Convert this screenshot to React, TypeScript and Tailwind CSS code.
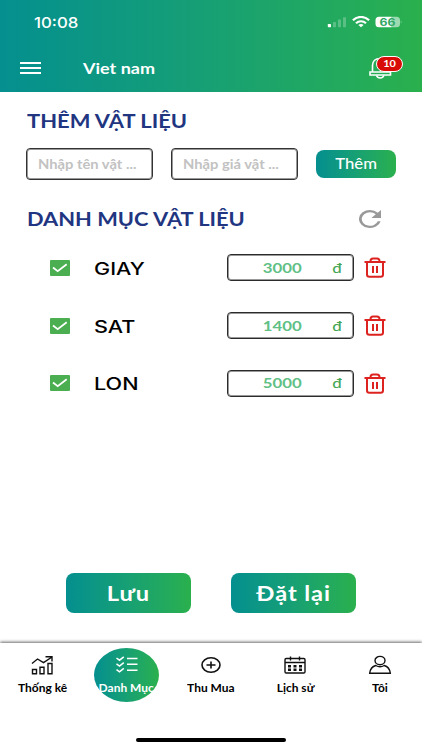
import { useState } from 'react'
import type { ReactNode } from 'react'

const materials = [
  { name: 'GIAY', price: '3000' },
  { name: 'SAT', price: '1400' },
  { name: 'LON', price: '5000' },
]

function WideText({ className, children }: { className: string; children: ReactNode }) {
  return <span className={`block whitespace-nowrap leading-none ${className}`}>{children}</span>
}

function StatusIcons() {
  return (
    <svg className="h-3 w-[76px]" viewBox="0 0 76 12" fill="#fff">
      <rect x="0.8" y="8" width="3.2" height="3.2" rx="0.6" />
      <g opacity="0.25">
        <rect x="6" y="6" width="3" height="5.2" rx="0.6" />
        <rect x="11" y="3.4" width="3" height="7.8" rx="0.6" />
        <rect x="16" y="1.2" width="3" height="10" rx="0.6" />
      </g>
      <g fill="none" stroke="#fff" strokeWidth="2.2">
        <path d="M25.9 4.3a11.5 11.5 0 0 1 16.2 0" />
        <path d="M29 7.2a7.4 7.4 0 0 1 10 0" />
      </g>
      <path d="M31.4 9a4.4 4.4 0 0 1 5.2 0L34 11.3z" />
      <path d="M52 .7h12.5v10.6H52a3.5 3.5 0 0 1-3.5-3.5V4.2A3.5 3.5 0 0 1 52 .7z" />
      <path d="M64.5 .7h5A3.5 3.5 0 0 1 73 4.2v3.6a3.5 3.5 0 0 1-3.5 3.5h-5z" opacity="0.55" />
      <path d="M73.8 4.4q1.6 1.6 0 3.2z" opacity="0.55" />
      <text
        x="52.5"
        y="9.8"
        fill="#2fa866"
        fontFamily="Inter, sans-serif"
        fontWeight="700"
        fontSize="10.5"
        textLength="16"
        lengthAdjust="spacingAndGlyphs"
      >
        66
      </text>
    </svg>
  )
}

function BellIcon() {
  return (
    <svg className="h-[22px] w-6" viewBox="0 0 24 22" fill="none" stroke="#fff" strokeWidth="1.6">
      <path d="M3.5 15V8.500C3.500 4 6.500 1.500 11 1.500S18.500 4 18.500 8.500V15" />
      <path d="M1 15h20.500v3H1z" />
      <path d="M7.500 18.500q1 2.500 3.700 2.500t3.700-2.500" />
    </svg>
  )
}

function RefreshIcon() {
  return (
    <svg className="h-[18px] w-[22px]" viewBox="4 4 16 16" preserveAspectRatio="none" fill="#999">
      <path d="M17.650 6.350A7.960 7.960 0 0 0 12 4a8 8 0 1 0 7.730 10h-2.080A6 6 0 1 1 12 6c1.660 0 3.140.69 4.220 1.780L13 11h7V4z" />
    </svg>
  )
}

function TrashIcon() {
  return (
    <svg className="h-[21px] w-[22px]" viewBox="0 0 22 21" fill="none" stroke="#dd2320" strokeWidth="2">
      <path d="M.5 5h21" />
      <path d="M6.500 5V4q0-2.500 2.500-2.500h4q2.500 0 2.500 2.500v1" />
      <path d="M3 5v12.500q0 2.200 2.400 2.200h11.200q2.400 0 2.400-2.200V5" />
      <path d="M9 9v7M13 9v7" strokeWidth="2" />
    </svg>
  )
}

function ChartIcon() {
  return (
    <svg className="h-5 w-6" viewBox="0 0 24 20" fill="none" stroke="#111" strokeWidth="1.4">
      <path d="M2 8.500 7.500 4l6 3.700L22 2M15.500 1.800H22V6.500" />
      <path d="M2.500 14.500h4v4.200h-4zM10 12.200h4v6.500h-4zM18 8.500h4v10.200h-4z" />
    </svg>
  )
}

function ListIcon() {
  return (
    <svg className="h-5 w-6" viewBox="0 0 24 20" fill="none" stroke="#fff" strokeWidth="1.5">
      <path d="m1.500 3 3 2.200L8.800 1.800M1.500 8.800l3 2.200 4.300-3.400M1.500 14.600l3 2.200 4.300-3.400" />
      <path d="M12 3.500h10.500M12 9.300h10.500M12 15.200h10.500" />
    </svg>
  )
}

function PlusIcon() {
  return (
    <svg className="h-5 w-6" viewBox="0 0 24 20" fill="none" stroke="#111" strokeWidth="1.6">
      <ellipse cx="12" cy="10" rx="9" ry="7.3" />
      <path d="M7.500 10h9M12 6.500v7" />
    </svg>
  )
}

function CalendarIcon() {
  return (
    <svg className="h-5 w-6" viewBox="0 0 24 20" fill="none" stroke="#111" strokeWidth="1.4">
      <rect x="2" y="3.5" width="20" height="14.5" rx="1.2" />
      <path d="M2 7.500h20M7.500 1.500v4M16.500 1.500v4" />
      <path d="M5 11.300h3M10.500 11.300h3M16 11.300h3M5 14.800h3M10.500 14.800h3M16 14.800h3" strokeWidth="2.6" />
    </svg>
  )
}

function UserIcon() {
  return (
    <svg className="h-5 w-6" viewBox="0 0 24 20" fill="none" stroke="#111" strokeWidth="1.4">
      <ellipse cx="12" cy="5.6" rx="5" ry="4.2" />
      <path d="M7.800 10.500C4 11.500 2.200 14 1.700 18.200h20.600C21.800 14 20 11.500 16.200 10.500q-4.200 2.600-8.400 0z" />
    </svg>
  )
}

const tabs = [
  { label: 'Thống kê', icon: <ChartIcon /> },
  { label: 'Danh Mục', icon: <ListIcon /> },
  { label: 'Thu Mua', icon: <PlusIcon /> },
  { label: 'Lịch sử', icon: <CalendarIcon /> },
  { label: 'Tôi', icon: <UserIcon /> },
]

export default function App() {
  const [activeTab, setActiveTab] = useState(1)

  return (
    <div className="flex h-[750px] w-[422px] flex-col overflow-hidden bg-white font-['Lato',sans-serif]">
      <header className="h-[92px] shrink-0 bg-linear-to-r from-[#058f8f] to-[#2ab04c] text-white">
        <div className="flex h-11 items-center justify-between pl-[34px] pr-[19px]">
          <WideText className="origin-left scale-x-[1.12] font-['Inter',sans-serif] text-[15px] font-medium">10:08</WideText>
          <StatusIcons />
        </div>
        <div className="flex h-12 items-center pl-5 pr-[29px]">
          <button className="flex w-[21px] flex-col gap-[3px]" aria-label="Menu">
            <span className="h-[2px] bg-white" />
            <span className="h-[2px] bg-white" />
            <span className="h-[2px] bg-white" />
          </button>
          <WideText className="ml-[42px] origin-left scale-x-[1.2] text-[15px] font-bold">Viet nam</WideText>
          <div className="relative ml-auto h-[22px] w-[24px]">
            <BellIcon />
            <span className="absolute -top-[1px] left-[7px] flex h-4 w-[27px] items-center justify-center rounded-full border border-white bg-[#d80d08]">
              <WideText className="scale-x-[1.15] text-[9.5px] font-bold">10</WideText>
            </span>
          </div>
        </div>
      </header>

      <main className="flex flex-1 flex-col">
        <h1 className="flex h-[56px] items-center pl-[27px] pt-[2px] text-[#213581]">
          <WideText className="origin-left scale-x-[1.185] text-[18.5px] font-bold">THÊM VẬT LIỆU</WideText>
        </h1>
        <div className="flex h-8 items-center pl-[26px]">
          <div className="flex h-8 w-[127px] items-center rounded-[4px] border border-[#333] pl-[11px] pt-[2px] inset-shadow-[0_0_0_1px_#999]">
            <WideText className="origin-left scale-x-[1.18] text-[12.5px] font-bold text-[#c2c2c2]">Nhập tên vật ...</WideText>
          </div>
          <div className="ml-[18px] flex h-8 w-[127px] items-center rounded-[4px] border border-[#333] pl-[11px] pt-[2px] inset-shadow-[0_0_0_1px_#999]">
            <WideText className="origin-left scale-x-[1.18] text-[12.5px] font-bold text-[#c2c2c2]">Nhập giá vật ...</WideText>
          </div>
          <button className="ml-[18px] flex h-[28px] w-20 items-center justify-center rounded-[8px] bg-linear-to-r from-[#058f8f] to-[#2ab04c] pt-px text-white">
            <WideText className="scale-x-[1.15] text-[14.5px] font-medium">Thêm</WideText>
          </button>
        </div>

        <div className="mt-[20px] flex h-[38px] items-center justify-between pl-[27px] pr-[41px]">
          <h2 className="pt-px text-[#213581]">
            <WideText className="origin-left scale-x-[1.18] text-[18.5px] font-bold">DANH MỤC VẬT LIỆU</WideText>
          </h2>
          <RefreshIcon />
        </div>

        <ul className="mt-[1px]">
          {materials.map((item) => (
            <li key={item.name} className="flex h-[57.7px] items-center pl-[50px]">
              <svg className="h-4 w-5" viewBox="0 0 20 16">
                <rect width="20" height="16" rx="1" fill="#4bae50" />
                <path d="m3 7.500 4.700 3.700 9-7" fill="none" stroke="#fff" strokeWidth="1.8" />
              </svg>
              <div className="ml-6 w-[133px] pt-[3px]">
                <WideText className="origin-left scale-x-[1.27] font-['Inter',sans-serif] text-[17px] font-medium text-black">{item.name}</WideText>
              </div>
              <div className="flex h-[27px] w-[127px] items-center rounded-[4px] border border-[#2b2b2b] text-[#60c085] inset-shadow-[0_0_0_1px_#999]">
                <div className="flex w-[108px] justify-center">
                  <WideText className="scale-x-[1.2] text-[14px] font-bold">{item.price}</WideText>
                </div>
                <WideText className="-ml-[3px] scale-x-[1.2] text-[14px] font-medium text-[#43a654]">đ</WideText>
              </div>
              <div className="ml-[10px]">
                <TrashIcon />
              </div>
            </li>
          ))}
        </ul>

        <div className="mt-auto mb-[30px] flex gap-10 pl-[66px]">
          <button className="flex h-10 w-[125px] items-center justify-center rounded-[8px] bg-linear-to-r from-[#058f8f] to-[#2ab04c] text-white">
            <WideText className="scale-x-[1.18] text-[20px] font-bold tracking-[0.8px]">Lưu</WideText>
          </button>
          <button className="flex h-10 w-[125px] items-center justify-center rounded-[8px] bg-linear-to-r from-[#058f8f] to-[#2ab04c] text-white">
            <WideText className="scale-x-[1.18] text-[20px] font-bold tracking-[0.8px]">Đặt lại</WideText>
          </button>
        </div>
      </main>

      <nav className="flex h-[107px] shrink-0 flex-col bg-white shadow-[0_-1px_3px_rgba(0,0,0,0.6)]">
        <div className="flex pt-[5px]">
          {tabs.map((tab, i) => (
            <button key={tab.label} onClick={() => setActiveTab(i)} className="flex flex-1 justify-center">
              <span
                className={
                  i === activeTab
                    ? 'flex h-[54px] w-[65px] flex-col items-center rounded-[50%] bg-linear-to-r from-[#058f8f] to-[#2ab04c] pt-[7px] text-white'
                    : 'flex h-[54px] w-[65px] flex-col items-center pt-[7px] text-black'
                }
              >
                {tab.icon}
                <WideText className="mt-[8px] scale-x-[1.14] text-[10.5px] font-bold">{tab.label}</WideText>
              </span>
            </button>
          ))}
        </div>
        <div className="mx-auto mt-auto mb-[8px] h-1 w-[150px] rounded-full bg-black" />
      </nav>
    </div>
  )
}
